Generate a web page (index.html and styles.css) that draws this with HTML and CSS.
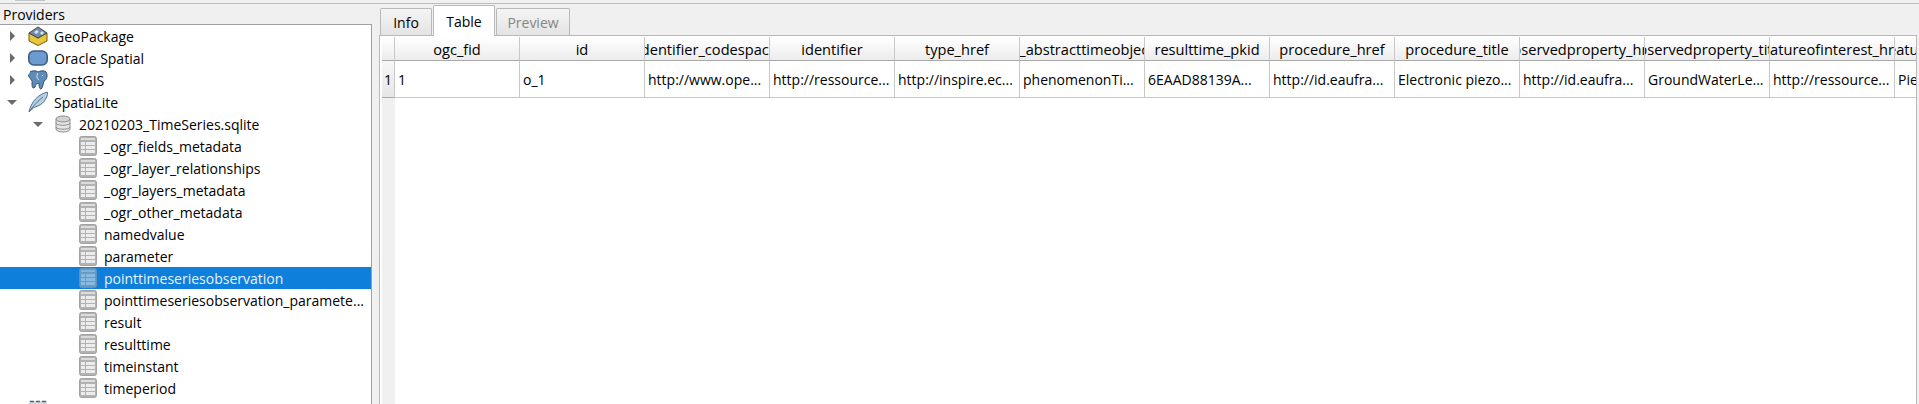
FILE: index.html
```html
<!DOCTYPE html>
<html lang="en">
<head>
    <meta charset="UTF-8" />
    <title>Browser Table</title>
    <link rel="stylesheet" href="styles.css">
</head>
<body>
    <svg width="0" height="0" class="defs">
        <defs>
            <symbol id="tbl" viewBox="0 0 18 20">
                <rect x="0.5" y="0.5" width="17" height="19" rx="2" fill="#b2b2b2" stroke="#a3a3a3"/>
                <rect x="2" y="2" width="14" height="2" fill="#dcdcdc"/>
                <g fill="#ececec">
                    <rect x="2" y="6" width="4" height="3"/><rect x="7" y="6" width="9" height="3"/>
                    <rect x="2" y="10" width="4" height="3"/><rect x="7" y="10" width="9" height="3"/>
                    <rect x="2" y="14" width="4" height="3"/><rect x="7" y="14" width="9" height="3"/>
                </g>
            </symbol>
        </defs>
    </svg>
    <div class="topline"><span class="topthumb"></span></div>
    <div class="main">
        <div class="left">
            <div class="panel-title">Providers</div>
            <div class="tree">
                <div class="row"><span class="arrow closed"></span>
                    <svg class="icon" viewBox="0 0 20 20"><path d="M1 7 10 12 19 7V15L10 19.500 1 15Z" fill="#e8c83a" stroke="#6b5a14"/><path d="M1 7 10 1 19 7 10 12Z" fill="#6d8db0" stroke="#444"/><path d="M6 6 9 4 11 6 8 8ZM12 7l2-2 2 2-2 2Z" fill="#d8e2ea"/></svg>
                    <span>GeoPackage</span></div>
                <div class="row"><span class="arrow closed"></span>
                    <svg class="icon" viewBox="0 0 20 20"><rect x="0.800" y="3" width="18.400" height="14" rx="5" fill="#6d9ad0" stroke="#3d5f86" stroke-width="1.600"/></svg>
                    <span>Oracle Spatial</span></div>
                <div class="row"><span class="arrow closed"></span>
                    <svg class="icon" viewBox="0 0 20 20"><path d="M2 2C5 0 9 1 10 2 12 1 16 0 18 2 20 5 19 10 16 11 15 13 15 18 13 19 11 19 11 15 11 13 9 14 8 13 7 17 5 19 4 18 4 13 5 11 2 9 0 5 2 2Z" fill="#5f8cb8" stroke="#2f4f6f"/><path d="M10 3C8 6 9 9 11 10M14 5l1 1" fill="none" stroke="#dde7ef"/></svg>
                    <span>PostGIS</span></div>
                <div class="row"><span class="arrow open"></span>
                    <svg class="icon" viewBox="0 0 20 20"><path d="M1 20C3 10 10 2 20 0 19 7 15 13 7 15 5 16 3 18 1 20Z" fill="#b9cfe2" stroke="#4f6f8f"/><path d="M1 20C6 13 10 9 15 5" fill="none" stroke="#4f6f8f"/></svg>
                    <span>SpatiaLite</span></div>
                <div class="row child"><span class="arrow open"></span>
                    <svg class="icon dbicon" viewBox="0 0 16 18"><path d="M1 4V14C1 18 15 18 15 14V4Z" fill="#e6e6e6" stroke="#8c8c8c"/><ellipse cx="8" cy="4" rx="7" ry="3" fill="#d2d2d2" stroke="#8c8c8c"/><path d="M1 8C1 11 15 11 15 8M1 12C1 15 15 15 15 12" fill="none" stroke="#8c8c8c"/></svg>
                    <span>20210203_TimeSeries.sqlite</span></div>
                <div class="row leaf"><svg class="tbl"><use href="#tbl"/></svg><span>_ogr_fields_metadata</span></div>
                <div class="row leaf"><svg class="tbl"><use href="#tbl"/></svg><span>_ogr_layer_relationships</span></div>
                <div class="row leaf"><svg class="tbl"><use href="#tbl"/></svg><span>_ogr_layers_metadata</span></div>
                <div class="row leaf"><svg class="tbl"><use href="#tbl"/></svg><span>_ogr_other_metadata</span></div>
                <div class="row leaf"><svg class="tbl"><use href="#tbl"/></svg><span>namedvalue</span></div>
                <div class="row leaf"><svg class="tbl"><use href="#tbl"/></svg><span>parameter</span></div>
                <div class="row leaf selected"><svg class="tbl"><use href="#tbl"/></svg><span>pointtimeseriesobservation</span></div>
                <div class="row leaf"><svg class="tbl"><use href="#tbl"/></svg><span>pointtimeseriesobservation_paramete...</span></div>
                <div class="row leaf"><svg class="tbl"><use href="#tbl"/></svg><span>result</span></div>
                <div class="row leaf"><svg class="tbl"><use href="#tbl"/></svg><span>resulttime</span></div>
                <div class="row leaf"><svg class="tbl"><use href="#tbl"/></svg><span>timeinstant</span></div>
                <div class="row leaf"><svg class="tbl"><use href="#tbl"/></svg><span>timeperiod</span></div>
                <div class="row cutoff">
                    <svg class="icon" viewBox="0 0 20 20"><rect x="1" y="1" width="18" height="18" fill="#d5dce3"/><path d="M2 1.500H6M8 1.500H12M14 1.500H18" stroke="#59636e" stroke-width="1.600"/></svg>
                </div>
            </div>
        </div>
        <div class="right">
            <div class="tabs">
                <div class="tab">Info</div>
                <div class="tab active">Table</div>
                <div class="tab disabled">Preview</div>
            </div>
            <div class="pane">
                <div class="grid">
                    <div class="head corner"></div>
                    <div class="head"><span>ogc_fid</span></div>
                    <div class="head"><span>id</span></div>
                    <div class="head"><span>identifier_codespace</span></div>
                    <div class="head"><span>identifier</span></div>
                    <div class="head"><span>type_href</span></div>
                    <div class="head"><span>o_abstracttimeobject</span></div>
                    <div class="head"><span>resulttime_pkid</span></div>
                    <div class="head"><span>procedure_href</span></div>
                    <div class="head"><span>procedure_title</span></div>
                    <div class="head"><span>observedproperty_href</span></div>
                    <div class="head"><span>observedproperty_title</span></div>
                    <div class="head"><span>featureofinterest_href</span></div>
                    <div class="head"><span>featureofinterest_title</span></div>

                    <div class="rownum">1</div>
                    <div class="cell">1</div>
                    <div class="cell">o_1</div>
                    <div class="cell">http://www.ope...</div>
                    <div class="cell">http://ressource...</div>
                    <div class="cell">http://inspire.ec...</div>
                    <div class="cell">phenomenonTi...</div>
                    <div class="cell">6EAAD88139A...</div>
                    <div class="cell">http://id.eaufra...</div>
                    <div class="cell">Electronic piezo...</div>
                    <div class="cell">http://id.eaufra...</div>
                    <div class="cell">GroundWaterLe...</div>
                    <div class="cell">http://ressource...</div>
                    <div class="cell">Piezometer...</div>
                </div>
                <div class="filler"><div class="gutter"></div></div>
            </div>
        </div>
    </div>
</body>
</html>
```

FILE: styles.css
```css
* {
    box-sizing: border-box;
}
html, body {
    margin: 0;
    height: 404px;
    overflow: hidden;
}
body {
    display: flex;
    flex-direction: column;
    background-color: #f0f0f0;
    font-family: "Open Sans", sans-serif;
    font-size: 14px;
    color: #000;
}
.defs {
    position: absolute;
}
.topline {
    height: 4px;
    border-bottom: 1px solid #bdbdbd;
}
.topthumb {
    display: block;
    width: 30px;
    height: 1px;
    margin-left: 15px;
    background: #c4c4c4;
}
.main {
    flex: 1;
    display: flex;
    min-height: 0;
}
.left {
    width: 372px;
    flex: none;
    display: flex;
    flex-direction: column;
}
.panel-title {
    height: 20px;
    padding-left: 3px;
    line-height: 22px;
}
.tree {
    flex: 1;
    min-height: 0;
    background: white;
    border-top: 1px solid #a0a0a0;
    border-right: 1px solid #a0a0a0;
    overflow: hidden;
}
.row {
    height: 22px;
    display: flex;
    align-items: center;
    white-space: nowrap;
    padding-left: 10px;
}
.row.child {
    padding-left: 36px;
}
.row.leaf {
    padding-left: 79px;
}
.row.cutoff {
    padding-left: 28px;
}
.row.selected {
    background: #0f7fdc;
    color: #e8f2fb;
}
.selected .tbl {
    opacity: 0.55;
}
.arrow {
    width: 0;
    height: 0;
    flex: none;
}
.arrow.closed {
    margin-right: 13px;
    border-left: 5px solid #6b6b6b;
    border-top: 5px solid transparent;
    border-bottom: 5px solid transparent;
}
.arrow.open {
    margin: 0 11px 0 -3px;
    border-top: 5px solid #6b6b6b;
    border-left: 5px solid transparent;
    border-right: 5px solid transparent;
}
.icon {
    width: 20px;
    height: 20px;
    flex: none;
    margin-right: 6px;
}
.dbicon {
    width: 16px;
    height: 18px;
    margin-left: 1px;
    margin-right: 8px;
}
.tbl {
    width: 18px;
    height: 20px;
    flex: none;
    margin-right: 7px;
}
.right {
    flex: 1;
    min-width: 0;
    padding: 4px 2px 0 7px;
    display: flex;
    flex-direction: column;
}
.tabs {
    display: flex;
    height: 27px;
    align-items: flex-end;
    padding-left: 1px;
    position: relative;
    z-index: 1;
}
.tab {
    height: 27px;
    line-height: 28px;
    text-align: center;
    background: linear-gradient(#f4f4f4, #e4e4e4);
    border: 1px solid #b9b9b9;
    border-bottom: none;
    border-radius: 2px 2px 0 0;
    margin-right: 1px;
}
.tab:nth-child(1) {
    width: 52px;
}
.tab:nth-child(2) {
    width: 62px;
}
.tab:nth-child(3) {
    width: 74px;
}
.tab.active {
    height: 31px;
    background: white;
    line-height: 31px;
    margin-bottom: -1px;
}
.tab.disabled {
    color: #858585;
}
.pane {
    flex: 1;
    min-height: 0;
    display: flex;
    flex-direction: column;
    border: 1px solid #b9b9b9;
    border-bottom: none;
    padding: 1px 0 0 2px;
    overflow: hidden;
    background: white;
}
.grid {
    display: grid;
    grid-template-columns: 13px repeat(13, 125px);
    grid-template-rows: 24px 37px;
    flex: none;
}
.head {
    display: flex;
    justify-content: center;
    align-items: center;
    padding-top: 1px;
    overflow: hidden;
    white-space: nowrap;
    font-size: 14.6px;
    background: linear-gradient(white, #ececec);
    border-right: 1px solid #c8c8c8;
    border-bottom: 1px solid #a9a9a9;
}
.head span {
    flex: none;
}
.rownum {
    background: linear-gradient(#f7f7f7, #e6e6e6);
    border-right: 1px solid #c8c8c8;
    border-bottom: 1px solid #a9a9a9;
    display: flex;
    align-items: center;
    justify-content: center;
}
.cell {
    display: flex;
    align-items: center;
    padding-left: 3px;
    white-space: nowrap;
    overflow: hidden;
    background: white;
    border-right: 1px solid #c8c8c8;
    border-bottom: 1px solid #c8c8c8;
}
.filler {
    flex: 1;
}
.gutter {
    width: 13px;
    height: 100%;
    background: #f0f0f0;
}
```
